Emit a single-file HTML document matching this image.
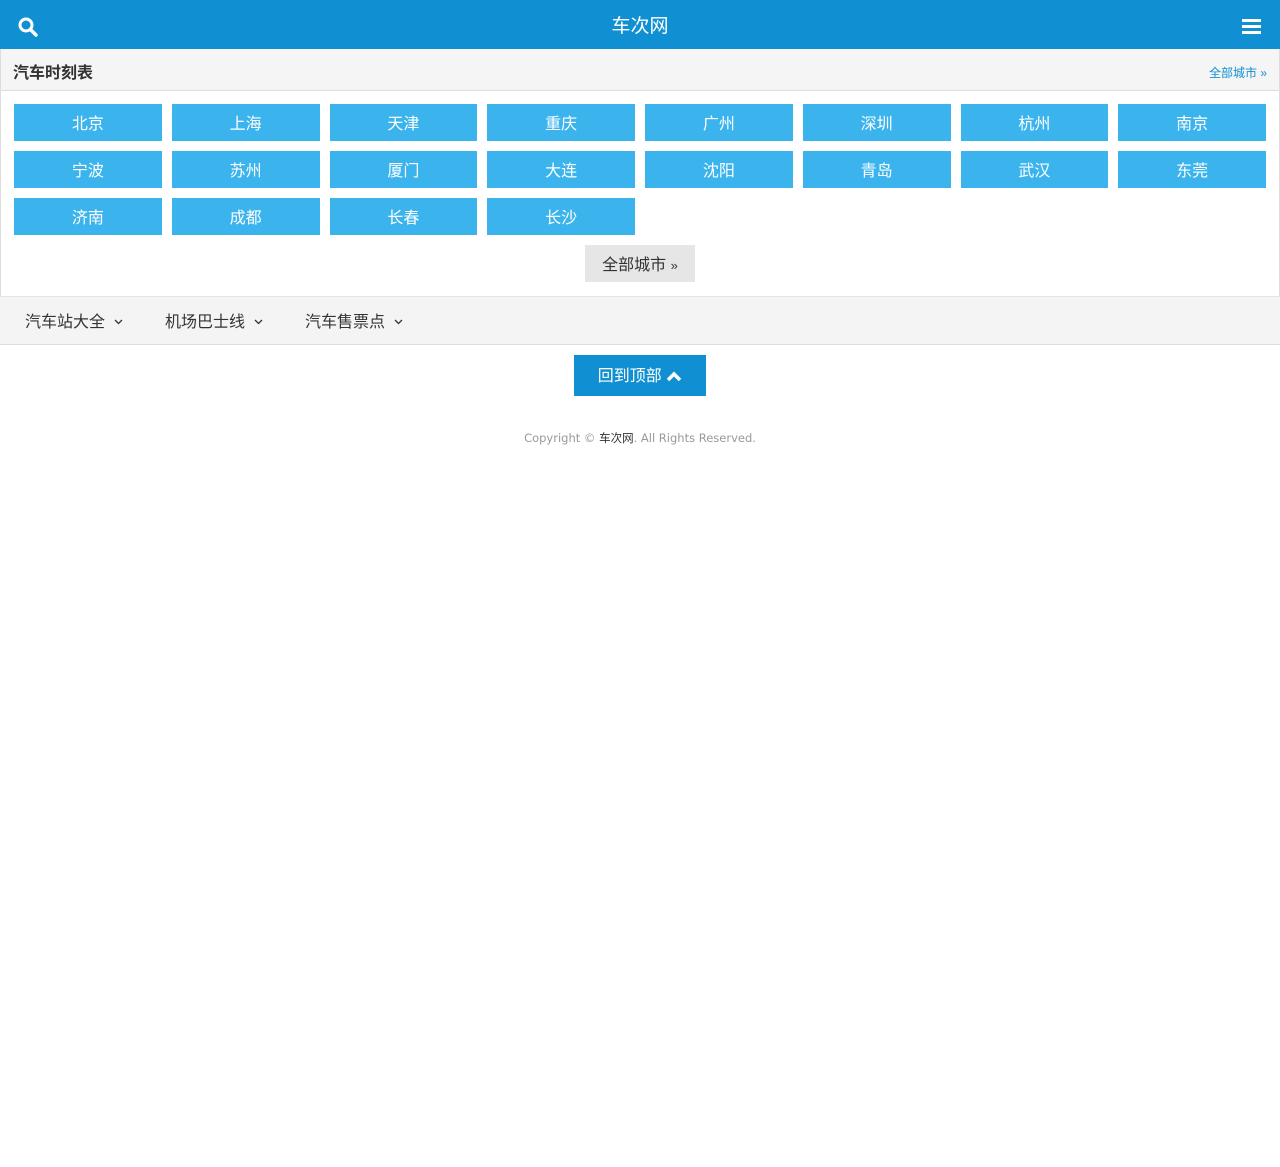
<!DOCTYPE html>
<html><head><meta charset="utf-8"><style>
*{margin:0;padding:0;box-sizing:border-box}
body{width:1280px;height:1167px;background:#fff;font-family:"Liberation Sans","Noto Sans CJK SC",sans-serif;position:relative}
.hd{height:49px;background:#1090d2;color:#fff;text-align:center;font-size:19px;line-height:53px;position:relative}
.hd svg{position:absolute}
.panel{position:absolute;left:0;top:49px;width:1280px;height:247px;border:1px solid #ddd;border-top:none;border-bottom:none}
.ph{height:42px;background:#f5f5f5;border-bottom:1px solid #ddd;padding:0 12px;line-height:49px;font-size:16px;font-weight:bold;color:#333;position:relative}
.ph a{position:absolute;right:12px;top:0;font-size:12px;font-weight:normal;color:#1090d2}
.grid{position:absolute;left:13px;top:55px;width:1252px;display:grid;grid-template-columns:repeat(8,1fr);column-gap:10px;row-gap:10px}
.grid div{height:37px;background:#3bb4ee;color:#fff;font-size:16px;text-align:center;line-height:41px}
.all{position:absolute;left:584px;top:196px;width:110px;height:37px;background:#e6e6e6;color:#333;font-size:16px;text-align:center;line-height:41px}
.nav{position:absolute;left:0;top:296px;width:1280px;height:49px;background:#f4f4f4;border-bottom:1px solid #ddd;border-top:1px solid #e5e5e5;font-size:16px;color:#333}
.nav span{position:absolute;top:11px}
.nav svg{margin-left:9px;vertical-align:2px}
.top{position:absolute;left:574px;top:355px;width:132px;height:41px;background:#1090d2;color:#fff;font-size:16px;text-align:center;line-height:44px}
.cp{position:absolute;top:430px;left:0;width:1280px;text-align:center;color:#999;font-family:"DejaVu Sans","Noto Sans CJK SC",sans-serif;font-size:11.5px}
.cp b{font-weight:normal;color:#333}
</style></head><body>
<div class="hd">车次网
<svg style="left:18px;top:17px" width="20" height="20" viewBox="0 0 20 20"><circle cx="8" cy="8" r="6" fill="none" stroke="#fff" stroke-width="3"/><path d="M12.5 12.5L18 18" stroke="#fff" stroke-width="3.5" stroke-linecap="round"/></svg>
<svg style="left:1242px;top:19px" width="19" height="15" viewBox="0 0 19 15"><rect y="0" width="19" height="3" fill="#fff"/><rect y="6" width="19" height="3" fill="#fff"/><rect y="12" width="19" height="3" fill="#fff"/></svg>
</div>
<div class="panel">
<div class="ph">汽车时刻表<a>全部城市 »</a></div>
<div class="grid">
<div>北京</div><div>上海</div><div>天津</div><div>重庆</div><div>广州</div><div>深圳</div><div>杭州</div><div>南京</div>
<div>宁波</div><div>苏州</div><div>厦门</div><div>大连</div><div>沈阳</div><div>青岛</div><div>武汉</div><div>东莞</div>
<div>济南</div><div>成都</div><div>长春</div><div>长沙</div>
</div>
<div class="all">全部城市 <span style="font-size:13px">»</span></div>
</div>
<div class="nav"><span style="left:25px">汽车站大全<svg width="9" height="6" viewBox="0 0 9 6"><path d="M1 1L4.5 4.5L8 1" fill="none" stroke="#333" stroke-width="1.3"/></svg></span><span style="left:165px">机场巴士线<svg width="9" height="6" viewBox="0 0 9 6"><path d="M1 1L4.5 4.5L8 1" fill="none" stroke="#333" stroke-width="1.3"/></svg></span><span style="left:305px">汽车售票点<svg width="9" height="6" viewBox="0 0 9 6"><path d="M1 1L4.5 4.5L8 1" fill="none" stroke="#333" stroke-width="1.3"/></svg></span></div>
<div class="top">回到顶部 <svg width="16" height="11" viewBox="0 0 16 11" style="vertical-align:-1px"><path d="M2 9L8 3L14 9" fill="none" stroke="#fff" stroke-width="3.5"/></svg></div>
<div class="cp">Copyright © <b>车次网</b>. All Rights Reserved.</div>
</body></html>
